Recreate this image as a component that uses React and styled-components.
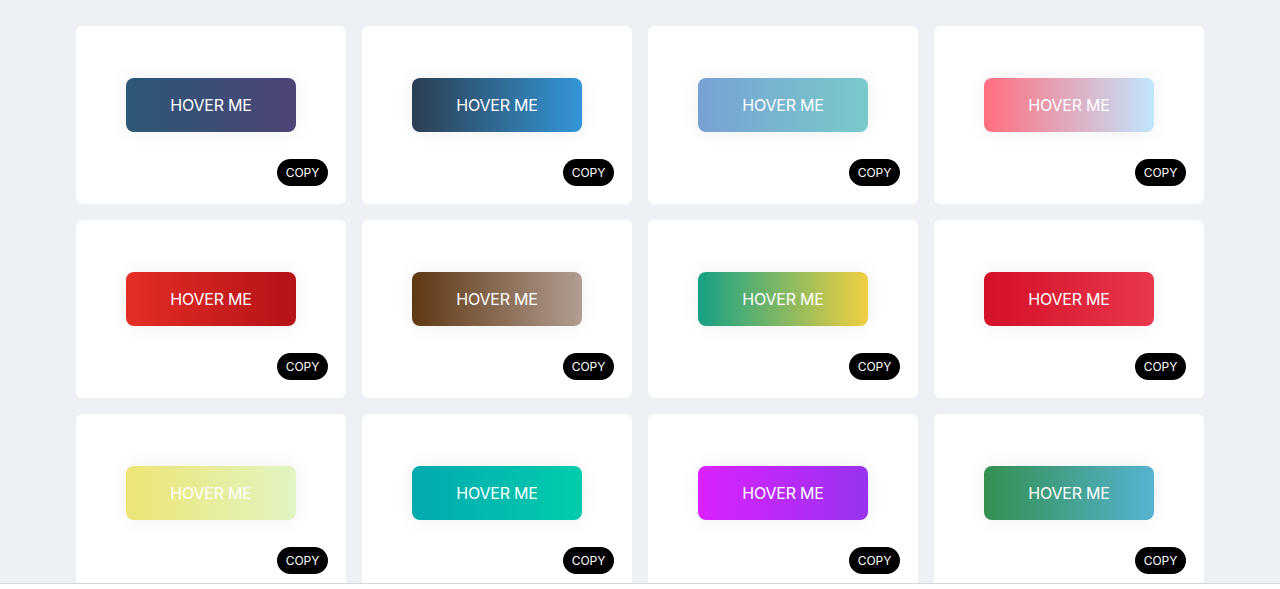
import React from "react";
import styled, { createGlobalStyle } from "styled-components";

const GlobalStyle = createGlobalStyle`
  * {
    box-sizing: border-box;
  }
  body {
    margin: 0;
    background: #edf1f5;
    font-family: Inter, "Noto Sans", "Liberation Sans", sans-serif;
  }
`;

const Page = styled.div`
  display: flex;
  justify-content: center;
  padding: 26px 0 40px;
`;

const Grid = styled.div`
  display: grid;
  grid-template-columns: repeat(4, 270px);
  gap: 16px;
`;

const Card = styled.div`
  display: flex;
  flex-direction: column;
  align-items: center;
  height: 178px;
  padding: 52px 18px 18px;
  background: #fff;
  border-radius: 6px;
`;

const GradientButton = styled.button`
  width: 170px;
  height: 54px;
  border: none;
  border-radius: 8px;
  color: #fff;
  font-family: inherit;
  font-size: 16px;
  letter-spacing: -0.2px;
  text-transform: uppercase;
  cursor: pointer;
  background-image: linear-gradient(
    to right,
    ${(p) => p.$from} 0%,
    ${(p) => p.$to} 51%,
    ${(p) => p.$from} 100%
  );
  background-size: 200% auto;
  box-shadow: 0 0 20px #eee;
  transition: 0.5s;
  &:hover {
    background-position: right center;
  }
`;

const CopyButton = styled.button`
  align-self: flex-end;
  margin-top: 27px;
  width: 51px;
  height: 27px;
  padding: 0;
  border: none;
  border-radius: 14px;
  background: #000;
  color: #fff;
  font-family: inherit;
  font-size: 12px;
  cursor: pointer;
`;

const Footer = styled.div`
  position: fixed;
  left: 0;
  right: 0;
  bottom: 0;
  height: 6px;
  background: #fff;
  border-top: 1px solid #d6d6d6;
`;

const gradients = [
  ["#2b5876", "#4e4376"],
  ["#2c3e50", "#3498db"],
  ["#77a1d3", "#79cbca"],
  ["#ff6e7f", "#bfe9ff"],
  ["#e52d27", "#b31217"],
  ["#603813", "#b29f94"],
  ["#16a085", "#f4d03f"],
  ["#d31027", "#ea384d"],
  ["#ede574", "#e1f5c4"],
  ["#02aab0", "#00cdac"],
  ["#da22ff", "#9733ee"],
  ["#348f50", "#56b4d3"],
];

const App = () => {
  return (
    <>
      <GlobalStyle />
      <Page>
        <Grid>
          {gradients.map(([from, to]) => (
            <Card key={from}>
              <GradientButton $from={from} $to={to}>
                Hover me
              </GradientButton>
              <CopyButton>COPY</CopyButton>
            </Card>
          ))}
        </Grid>
      </Page>
      <Footer />
    </>
  );
};

export default App;
